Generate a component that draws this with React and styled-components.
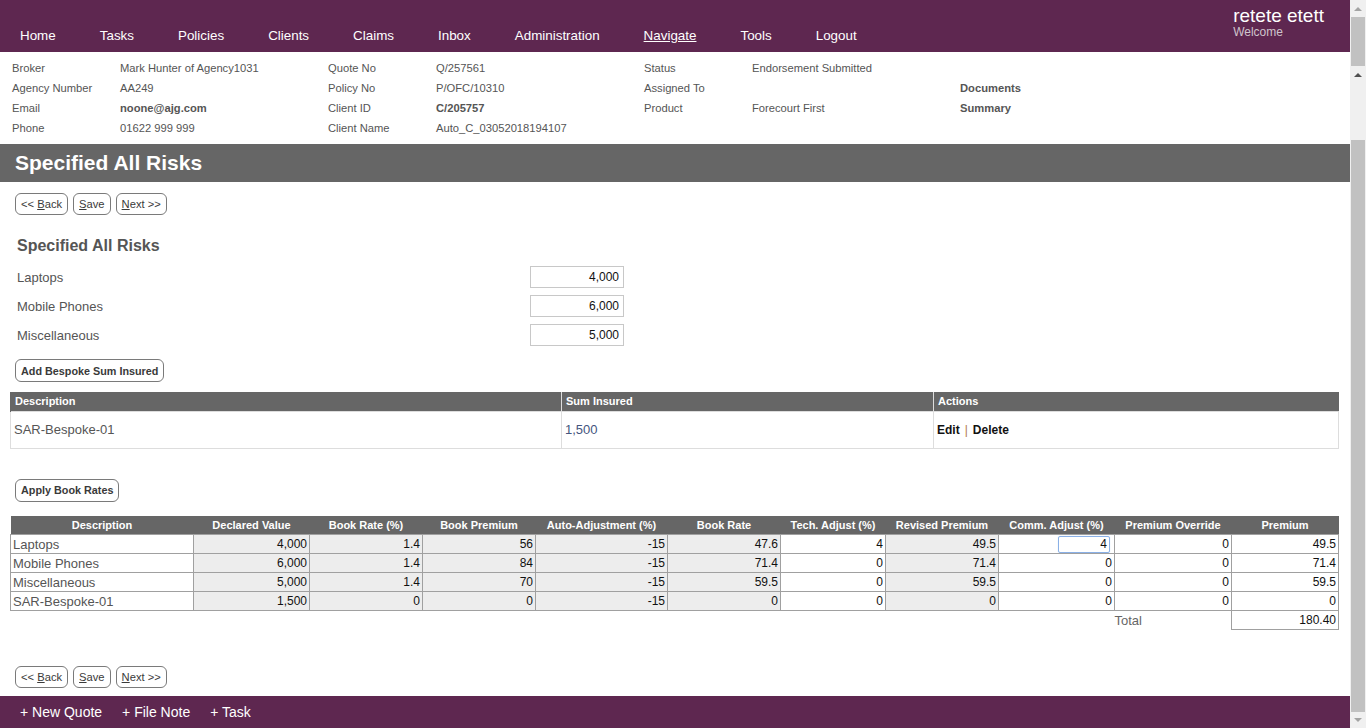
import React from "react";
import styled, { createGlobalStyle } from "styled-components";

const Global = createGlobalStyle`
  html, body { margin: 0; padding: 0; overflow: hidden; }
  body { font-family: "Liberation Sans", Arial, sans-serif; background: #fff; }
  * { box-sizing: border-box; }
`;

const PURPLE = "#5e2750";

const Shell = styled.div`
  display: flex;
  width: 1366px;
  height: 728px;
`;

const Main = styled.div`
  flex: 1;
  display: flex;
  flex-direction: column;
  min-width: 0;
`;

const Nav = styled.div`
  height: 52px;
  background: ${PURPLE};
  display: flex;
  align-items: flex-start;
  justify-content: space-between;
  padding: 0 26px 0 20px;
`;

const NavList = styled.div`
  display: flex;
  gap: 44px;
  padding-top: 27px;
`;

const NavItem = styled.span`
  color: #fff;
  font-size: 13.4px;
  line-height: 18px;
  text-decoration: ${(p) => (p.$active ? "underline" : "none")};
`;

const User = styled.div`
  display: flex;
  flex-direction: column;
  padding-top: 5px;
`;

const UserName = styled.span`
  color: #fff;
  font-size: 19px;
  line-height: 21px;
`;

const Welcome = styled.span`
  color: #cfc4cc;
  font-size: 12px;
  line-height: 13px;
`;

const Info = styled.div`
  display: grid;
  grid-template-columns: 108px 208px 108px 208px 108px 208px 1fr;
  grid-auto-rows: 20px;
  padding: 6px 12px 6px 12px;
  font-size: 11.2px;
  color: #555;
`;

const Cell = styled.span`
  line-height: 20px;
  white-space: nowrap;
  font-weight: ${(p) => (p.$bold ? "bold" : "normal")};
`;

const TitleBar = styled.div`
  height: 38px;
  background: #666;
  color: #fff;
  font-size: 21px;
  font-weight: bold;
  padding-left: 15px;
  display: flex;
  align-items: center;
`;

const Content = styled.div`
  flex: 1;
  overflow: hidden;
  display: flex;
  flex-direction: column;
  padding: 11px 12px 0 10px;
`;

const ButtonRow = styled.div`
  display: flex;
  gap: 5px;
  padding-left: 5px;
  margin-top: ${(p) => p.$mt || 0}px;
`;

const Btn = styled.button`
  height: ${(p) => (p.$tall ? 23 : 22)}px;
  padding: 0 5px;
  border: 1px solid #7a7a7a;
  border-radius: 6px;
  background: #fff;
  color: #3a3a3a;
  font-family: "Liberation Sans", Arial, sans-serif;
  font-size: ${(p) => (p.$bold ? 10.8 : 11.2)}px;
  font-weight: ${(p) => (p.$bold ? "bold" : "normal")};
  cursor: pointer;
  u { text-decoration: underline; }
`;

const SingleBtn = styled.div`
  padding-left: 5px;
  margin-top: ${(p) => p.$mt || 0}px;
`;

const SubHead = styled.h2`
  margin: 21px 0 0 7px;
  font-size: 16px;
  line-height: 20px;
  color: #555;
  font-weight: bold;
`;

const FieldList = styled.div`
  display: flex;
  flex-direction: column;
  gap: 7px;
  margin-top: 10px;
  padding-left: 7px;
  width: 614px;
`;

const Field = styled.div`
  display: flex;
  justify-content: space-between;
  align-items: center;
  height: 22px;
`;

const FieldLabel = styled.span`
  font-size: 13px;
  color: #555;
`;

const NumInput = styled.div`
  width: 94px;
  height: 22px;
  border: 1px solid #c8c8c8;
  font-size: 12px;
  color: #111;
  text-align: right;
  padding-right: 4px;
  line-height: 20px;
`;

const Table = styled.table`
  width: 1328px;
  table-layout: fixed;
  border-collapse: collapse;
  margin-top: ${(p) => p.$mt || 0}px;
`;

const Th1 = styled.th`
  background: #666;
  color: #fff;
  font-size: 11px;
  font-weight: bold;
  text-align: left;
  padding: 0 4px;
  height: 19px;
  border-left: 1px solid #ddd;
  &:first-child { border-left: 1px solid #666; }
`;

const Td1 = styled.td`
  height: 37px;
  border: 1px solid #ddd;
  padding: 0 3px;
  font-size: ${(p) => (p.$act ? 12 : 13)}px;
  color: ${(p) => p.$color || "#555"};
  font-weight: ${(p) => (p.$act ? "bold" : "normal")};
`;

const Sep = styled.span`
  color: #b0784a;
  font-weight: normal;
  margin: 0 5px;
`;

const ActionLink = styled.span`
  color: #111;
`;

const Th2 = styled.th`
  background: #666;
  color: #fff;
  font-size: 11px;
  font-weight: bold;
  text-align: center;
  height: 19px;
  padding: 0;
  white-space: nowrap;
`;

const Td2 = styled.td`
  height: 19px;
  border: 1px solid #a0a0a0;
  padding: 0 2px;
  font-size: ${(p) => (p.$desc ? 13 : 12)}px;
  color: ${(p) => (p.$desc ? "#555" : "#111")};
  text-align: ${(p) => (p.$desc ? "left" : "right")};
  background: ${(p) => (p.$grey ? "#ededed" : "#fff")};
  white-space: nowrap;
`;

const FocusBox = styled.div`
  margin-left: auto;
  margin-right: 2px;
  width: 52px;
  height: 17px;
  border: 1px solid #8ab0e6;
  border-radius: 2px;
  box-shadow: 0 0 1px #b8d0f2;
  text-align: right;
  padding-right: 2px;
  line-height: 15px;
`;

const TotalLabel = styled.td`
  height: 19px;
  font-size: 13px;
  color: #666;
  padding: 0;
`;

const TotalValue = styled.td`
  border: 1px solid #a0a0a0;
  font-size: 12px;
  color: #111;
  text-align: right;
  padding: 0 2px;
`;

const Footer = styled.div`
  height: 32px;
  background: ${PURPLE};
  display: flex;
  align-items: center;
  gap: 20px;
  padding-left: 20px;
`;

const FooterItem = styled.span`
  color: #fff;
  font-size: 14px;
`;

const Gutter = styled.div`
  width: 16px;
  background: #f0f0f0;
  display: flex;
  flex-direction: column;
  align-items: center;
`;

const Arrow = styled.div`
  height: ${(p) => p.$h || 16}px;
  width: 16px;
  display: flex;
  align-items: center;
  justify-content: center;
  &::after {
    content: "";
    border-left: 4px solid transparent;
    border-right: 4px solid transparent;
    ${(p) => (p.$down ? "border-top" : "border-bottom")}: 4px solid ${(p) => (p.$dark ? "#505050" : "#a3a3a3")};
  }
`;

const Thumb = styled.div`
  width: 14px;
  background: #c1c1c1;
  height: ${(p) => (p.$h ? p.$h + "px" : "auto")};
  flex: ${(p) => (p.$h ? "none" : 1)};
`;

const Spacer = styled.div`
  height: ${(p) => p.$h}px;
`;

const NAV = ["Home", "Tasks", "Policies", "Clients", "Claims", "Inbox", "Administration", "Navigate", "Tools", "Logout"];

const INFO = [
  ["Broker", "Mark Hunter of Agency1031", "Quote No", "Q/257561", "Status", "Endorsement Submitted", ""],
  ["Agency Number", "AA249", "Policy No", "P/OFC/10310", "Assigned To", "", "Documents"],
  ["Email", "noone@ajg.com", "Client ID", "C/205757", "Product", "Forecourt First", "Summary"],
  ["Phone", "01622 999 999", "Client Name", "Auto_C_03052018194107", "", "", ""],
];
const BOLD = new Set(["noone@ajg.com", "C/205757", "Documents", "Summary"]);

const COLS = [
  ["Description", 183],
  ["Declared Value", 116],
  ["Book Rate (%)", 113],
  ["Book Premium", 113],
  ["Auto-Adjustment (%)", 132],
  ["Book Rate", 113],
  ["Tech. Adjust (%)", 105],
  ["Revised Premium", 113],
  ["Comm. Adjust (%)", 116],
  ["Premium Override", 117],
  ["Premium", 107],
];
const GREY = [false, true, true, true, true, true, false, true, false, false, false];

const ROWS = [
  ["Laptops", "4,000", "1.4", "56", "-15", "47.6", "4", "49.5", "4", "0", "49.5"],
  ["Mobile Phones", "6,000", "1.4", "84", "-15", "71.4", "0", "71.4", "0", "0", "71.4"],
  ["Miscellaneous", "5,000", "1.4", "70", "-15", "59.5", "0", "59.5", "0", "0", "59.5"],
  ["SAR-Bespoke-01", "1,500", "0", "0", "-15", "0", "0", "0", "0", "0", "0"],
];

function NavButtons({ mt }) {
  return (
    <ButtonRow $mt={mt}>
      <Btn>&lt;&lt; <u>B</u>ack</Btn>
      <Btn><u>S</u>ave</Btn>
      <Btn><u>N</u>ext &gt;&gt;</Btn>
    </ButtonRow>
  );
}

export default function App() {
  return (
    <Shell>
      <Global />
      <Main>
        <Nav>
          <NavList>
            {NAV.map((n) => (
              <NavItem key={n} $active={n === "Navigate"}>{n}</NavItem>
            ))}
          </NavList>
          <User>
            <UserName>retete etett</UserName>
            <Welcome>Welcome</Welcome>
          </User>
        </Nav>
        <Info>
          {INFO.flat().map((t, i) => (
            <Cell key={i} $bold={BOLD.has(t)}>{t}</Cell>
          ))}
        </Info>
        <TitleBar>Specified All Risks</TitleBar>
        <Content>
          <NavButtons mt={0} />
          <SubHead>Specified All Risks</SubHead>
          <FieldList>
            {[["Laptops", "4,000"], ["Mobile Phones", "6,000"], ["Miscellaneous", "5,000"]].map(([l, v]) => (
              <Field key={l}>
                <FieldLabel>{l}</FieldLabel>
                <NumInput>{v}</NumInput>
              </Field>
            ))}
          </FieldList>
          <SingleBtn $mt={13}>
            <Btn $bold $tall>Add Bespoke Sum Insured</Btn>
          </SingleBtn>
          <Table $mt={10}>
            <colgroup>
              <col style={{ width: 551 }} />
              <col style={{ width: 372 }} />
              <col style={{ width: 405 }} />
            </colgroup>
            <thead>
              <tr>
                <Th1>Description</Th1>
                <Th1>Sum Insured</Th1>
                <Th1>Actions</Th1>
              </tr>
            </thead>
            <tbody>
              <tr>
                <Td1>SAR-Bespoke-01</Td1>
                <Td1 $color="#44557e">1,500</Td1>
                <Td1 $act>
                  <ActionLink>Edit</ActionLink>
                  <Sep>|</Sep>
                  <ActionLink>Delete</ActionLink>
                </Td1>
              </tr>
            </tbody>
          </Table>
          <SingleBtn $mt={30}>
            <Btn $bold $tall>Apply Book Rates</Btn>
          </SingleBtn>
          <Table $mt={14}>
            <colgroup>
              {COLS.map(([n, w]) => (
                <col key={n} style={{ width: w }} />
              ))}
            </colgroup>
            <thead>
              <tr>
                {COLS.map(([n]) => (
                  <Th2 key={n}>{n}</Th2>
                ))}
              </tr>
            </thead>
            <tbody>
              {ROWS.map((r, ri) => (
                <tr key={ri}>
                  {r.map((v, ci) => (
                    <Td2 key={ci} $desc={ci === 0} $grey={GREY[ci]}>
                      {ri === 0 && ci === 8 ? <FocusBox>{v}</FocusBox> : v}
                    </Td2>
                  ))}
                </tr>
              ))}
              <tr>
                <td colSpan={9} />
                <TotalLabel>Total</TotalLabel>
                <TotalValue>180.40</TotalValue>
              </tr>
            </tbody>
          </Table>
          <NavButtons mt={36} />
        </Content>
        <Footer>
          <FooterItem>+ New Quote</FooterItem>
          <FooterItem>+ File Note</FooterItem>
          <FooterItem>+ Task</FooterItem>
        </Footer>
      </Main>
      <Gutter>
        <Arrow $h={17} />
        <Thumb $h={49} />
        <Arrow $h={18} $dark />
        <Spacer $h={56} />
        <Thumb />
        <Arrow $h={16} $down />
      </Gutter>
    </Shell>
  );
}
